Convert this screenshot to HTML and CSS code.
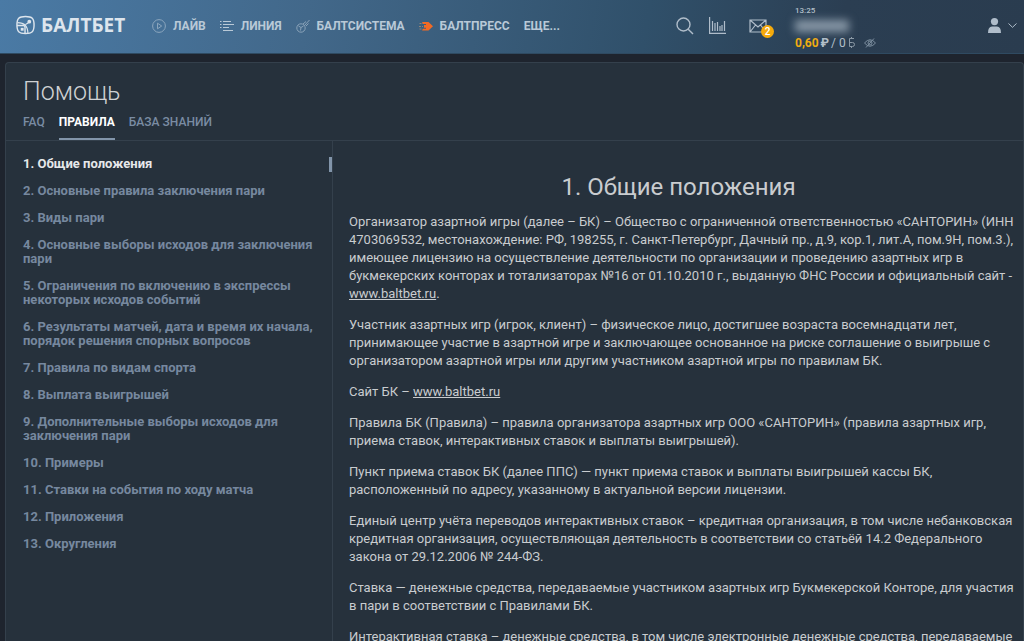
FILE: index.html
```html
<!DOCTYPE html>
<html lang="ru">
<head>
    <meta charset="UTF-8">
    <meta name="viewport" content="width=device-width, initial-scale=1.0">
    <title>Помощь – Правила</title>
    <link rel="stylesheet" href="styles.css">
</head>
<body>
    <header class="header">
        <a class="logo" href="#">
            <svg class="logo-icon" viewBox="0 0 20 20" fill="none" stroke="currentColor" stroke-width="1.5">
                <path d="M10 1C17 1 19 3 19 10S17 19 10 19 1 17 1 10 3 1 10 1Z"/>
                <path d="M1 10.500H7.500Q9.500 10.500 9.500 12.500V19"/>
                <path d="M1.500 7.500C7 7.500 12.500 10 12.500 19M10 9.500C11.500 9 13 8 14 6.500" stroke-width="1.200"/>
                <rect x="5" y="13" width="3" height="3" fill="currentColor" stroke="none"/>
                <circle cx="14" cy="6.500" r="2" fill="currentColor" stroke="none"/>
            </svg>
            <span>БАЛТБЕТ</span>
        </a>
        <nav class="nav">
            <a href="#">
                <svg class="nav-icon" viewBox="0 0 14 14" fill="none" stroke="currentColor">
                    <circle cx="7" cy="7" r="6.400"/>
                    <path d="M5.500 4.200 9.700 7 5.500 9.800Z"/>
                </svg>
                ЛАЙВ
            </a>
            <a href="#">
                <svg class="nav-icon nav-icon-line" viewBox="0 0 14 14" fill="none" stroke="currentColor">
                    <path d="M0 2.500H1.500M3 2.500H11M0 5.500H1.500M3 5.500H14M0 8.500H1.500M3 8.500H9M3 11.500H13"/>
                </svg>
                ЛИНИЯ
            </a>
            <a href="#">
                <svg class="nav-icon" viewBox="0 0 14 14" fill="none" stroke="currentColor">
                    <circle cx="5" cy="9" r="4.200"/>
                    <path d="M2.500 7 5 8.500 7.500 7M5 8.500 4.500 11.500M7 5 10 2.500M8.500 6.500 13.500 1M10 7 12.500 4.500" />
                </svg>
                БАЛТСИСТЕМА
            </a>
            <a href="#">
                <svg class="nav-icon nav-icon-press" viewBox="0 0 14 14">
                    <path d="M3 3H9.500L14 7.300 9.500 11.500H3L4 9.800H7V8.800H5V6H7V5H4Z" fill="#f26a25"/>
                    <path d="M.500 4.500H4M0 7.500H4M.500 10H3" stroke="#8f8478" fill="none" stroke-dasharray="2 1"/>
                </svg>
                БАЛТПРЕСС
            </a>
            <a href="#">ЕЩЕ...</a>
        </nav>
        <div class="tools">
            <button class="icon-btn" type="button" aria-label="Поиск">
                <svg width="18" height="18" viewBox="0 0 18 18" fill="none" stroke="currentColor" stroke-width="1.400">
                    <circle cx="7.500" cy="7.500" r="6.500"/>
                    <path d="M12.200 12.200 17 17"/>
                </svg>
            </button>
            <button class="icon-btn" type="button" aria-label="Статистика">
                <svg width="17" height="17" viewBox="0 0 17 17" fill="none" stroke="currentColor" stroke-width="1.200">
                    <path d="M.600 0V16.400H17M3.500 14V4M6 14V6M8.500 14V5M11 14V9M13 14V8M15.500 14V4"/>
                </svg>
            </button>
            <button class="icon-btn mail" type="button" aria-label="Сообщения">
                <svg width="18" height="14" viewBox="0 0 18 14" fill="none" stroke="currentColor" stroke-width="1.200">
                    <path d="M1 1H17V13H1ZM1 1 9 8 17 1M1 13 6.500 6M17 13 11.500 6"/>
                </svg>
                <span class="badge">2</span>
            </button>
        </div>
        <div class="account">
            <time class="clock">13:25</time>
            <div class="account-name"></div>
            <div class="balance">
                <b class="money">0,60</b>
                <b>₽</b>
                <span>/ 0</span>
                <svg class="bonus" width="7" height="11" viewBox="0 0 7 11" fill="none" stroke="currentColor">
                    <path d="M6 1.500H1.500V9.500H4.500Q6.500 9.500 6.500 7.500T4.500 5.500H1.500M3.500 0V1.500M3.500 9.500V11"/>
                </svg>
                <button class="icon-btn eye" type="button" aria-label="Скрыть баланс">
                    <svg width="12" height="10" viewBox="0 0 12 10" fill="none" stroke="currentColor">
                        <path d="M.500 5Q6-1.500 11.500 5 6 11.500.500 5ZM2 9.500 10 .500"/>
                        <circle cx="6" cy="5" r="2"/>
                    </svg>
                </button>
            </div>
        </div>
        <button class="icon-btn profile" type="button" aria-label="Профиль">
            <svg width="13" height="15" viewBox="0 0 13 15" fill="currentColor">
                <circle cx="6.500" cy="3.600" r="3.600"/>
                <path d="M0 15Q0 8.500 4 8.500H9Q13 8.500 13 15Z"/>
            </svg>
            <svg width="9" height="5" viewBox="0 0 9 5" fill="none" stroke="currentColor">
                <path d="M.500.500 4.500 4.300 8.500.500"/>
            </svg>
        </button>
    </header>

    <main class="panel">
        <div class="panel-header">
            <h1>Помощь</h1>
            <nav class="tabs">
                <a href="#">FAQ</a>
                <a class="active" href="#">ПРАВИЛА</a>
                <a href="#">БАЗА ЗНАНИЙ</a>
            </nav>
        </div>
        <div class="panel-body">
            <aside class="sidebar">
                <ul class="contents">
                    <li><a class="active" href="#">1. Общие положения</a></li>
                    <li><a href="#">2. Основные правила заключения пари</a></li>
                    <li><a href="#">3. Виды пари</a></li>
                    <li><a href="#">4. Основные выборы исходов для заключения пари</a></li>
                    <li><a href="#">5. Ограничения по включению в экспрессы некоторых исходов событий</a></li>
                    <li><a href="#">6. Результаты матчей, дата и время их начала, порядок решения спорных вопросов</a></li>
                    <li><a href="#">7. Правила по видам спорта</a></li>
                    <li><a href="#">8. Выплата выигрышей</a></li>
                    <li><a href="#">9. Дополнительные выборы исходов для заключения пари</a></li>
                    <li><a href="#">10. Примеры</a></li>
                    <li><a href="#">11. Ставки на события по ходу матча</a></li>
                    <li><a href="#">12. Приложения</a></li>
                    <li><a href="#">13. Округления</a></li>
                </ul>
                <div class="scroll-thumb"></div>
            </aside>
            <article class="article">
                <h2>1. Общие положения</h2>
                <p>Организатор азартной игры (далее – БК) – Общество с ограниченной ответственностью «САНТОРИН» (ИНН 4703069532, местонахождение: РФ, 198255, г. Санкт-Петербург, Дачный пр., д.9, кор.1, лит.А, пом.9Н, пом.3.), имеющее лицензию на осуществление деятельности по организации и проведению азартных игр в букмекерских конторах и тотализаторах №16 от 01.10.2010 г., выданную ФНС России и официальный сайт - <a href="#">www.baltbet.ru</a>.</p>
                <p>Участник азартных игр (игрок, клиент) – физическое лицо, достигшее возраста восемнадцати лет, принимающее участие в азартной игре и заключающее основанное на риске соглашение о выигрыше с организатором азартной игры или другим участником азартной игры по правилам БК.</p>
                <p>Сайт БК – <a href="#">www.baltbet.ru</a></p>
                <p>Правила БК (Правила) – правила организатора азартных игр ООО «САНТОРИН» (правила азартных игр, приема ставок, интерактивных ставок и выплаты выигрышей).</p>
                <p>Пункт приема ставок БК (далее ППС) — пункт приема ставок и выплаты выигрышей кассы БК, расположенный по адресу, указанному в актуальной версии лицензии.</p>
                <p>Единый центр учёта переводов интерактивных ставок – кредитная организация, в том числе небанковская кредитная организация, осуществляющая деятельность в соответствии со статьёй 14.2 Федерального закона от 29.12.2006 № 244-ФЗ.</p>
                <p>Ставка — денежные средства, передаваемые участником азартных игр Букмекерской Конторе, для участия в пари в соответствии с Правилами БК.</p>
                <p>Интерактивная ставка – денежные средства, в том числе электронные денежные средства, передаваемые</p>
            </article>
        </div>
    </main>
</body>
</html>
```
FILE: styles.css
```css
* {
    margin: 0;
    padding: 0;
    box-sizing: border-box;
}

body {
    display: flex;
    flex-direction: column;
    height: 100vh;
    overflow: hidden;
    background: #1e242e;
    color: #c9cccf;
    font-family: Roboto, "Liberation Sans", sans-serif;
    font-size: 13px;
}

a {
    color: inherit;
    text-decoration: none;
}

svg {
    flex: none;
}

/* Header */
.header {
    flex: none;
    display: flex;
    align-items: center;
    height: 54px;
    padding: 0 7px 0 16px;
    border-bottom: 1px solid #2f4a61;
    background: linear-gradient(100deg, #4a7aa5 0%, #42688a 30%, #30506a 63%, #2b3e52 82%, #2a3c4f 100%);
}

.logo {
    display: flex;
    align-items: center;
    gap: 6px;
    width: 136px;
    margin-top: -3px;
    color: #dde5ed;
    font-family: "Open Sans", sans-serif;
    font-size: 19px;
    font-weight: 700;
}

.logo-icon {
    width: 19px;
    height: 20px;
}

.nav {
    display: flex;
    gap: 14px;
    margin-top: -2px;
    color: #b9c9d7;
    font-size: 12px;
    font-weight: 700;
    white-space: nowrap;
}

.nav a {
    display: flex;
    align-items: center;
    gap: 7px;
}

.nav-icon {
    width: 14px;
    height: 14px;
    opacity: 0.6;
}

.nav-icon-line,
.nav-icon-press {
    opacity: 1;
}

.icon-btn {
    display: flex;
    align-items: center;
    border: none;
    background: none;
    color: #b0bdca;
    cursor: pointer;
}

.tools {
    display: flex;
    align-items: center;
    gap: 15px;
    margin: -2px 28px 0 auto;
}

.mail {
    position: relative;
    margin-left: 8px;
}

.badge {
    position: absolute;
    top: 6px;
    left: 12px;
    width: 13px;
    height: 13px;
    border-radius: 50%;
    background: #f5aa0c;
    color: #fff;
    font-family: Roboto, sans-serif;
    font-size: 10px;
    font-weight: 500;
    line-height: 13px;
    text-align: center;
}

.account {
    width: 193px;
    color: #b4c0ca;
}

.clock {
    display: block;
    font-size: 8px;
    font-weight: 500;
    line-height: 13px;
}

.account-name {
    width: 54px;
    height: 12px;
    margin: 3px 0 4px;
    background: #8797a6;
    filter: blur(4px);
}

.balance {
    display: flex;
    align-items: center;
    gap: 2px;
    font-size: 12px;
    line-height: 14px;
}

.money {
    color: #f0ac10;
}

.bonus {
    opacity: 0.7;
}

.eye {
    margin-left: 7px;
    color: #7d8fa0;
}

.profile {
    gap: 7px;
    margin-top: -3px;
}

/* Help panel */
.panel {
    flex: 1;
    display: flex;
    flex-direction: column;
    min-height: 0;
    margin: 8px 0 0 5px;
    border: 1px solid #34404c;
    border-bottom: none;
    border-radius: 4px 4px 0 0;
    background: #26313c;
}

.panel-header {
    flex: none;
    padding: 13px 17px 0;
    border-bottom: 1px solid #34404c;
}

.panel-header h1 {
    color: #cfd1d3;
    font-size: 25px;
    font-weight: 300;
    line-height: 32px;
}

.tabs {
    display: flex;
    gap: 14px;
    margin-top: 5px;
    color: #7a8ca3;
    font-size: 12px;
    font-weight: 500;
    line-height: 18px;
}

.tabs a {
    padding-bottom: 7px;
    border-bottom: 2px solid transparent;
}

.tabs .active {
    border-color: #8295aa;
    color: #fff;
    font-weight: 700;
}

.panel-body {
    flex: 1;
    display: grid;
    grid-template-columns: 327px 1fr;
    min-height: 0;
}

.sidebar {
    position: relative;
    padding: 9px 16px 0 17px;
    border-right: 1px solid #34404c;
}

.contents {
    list-style: none;
    color: #76889f;
    font-size: 13px;
    font-weight: 700;
    line-height: 14px;
}

.contents a {
    display: block;
    padding: 7px 0 6px;
}

.contents .active {
    color: #e6e8ea;
}

.scroll-thumb {
    position: absolute;
    top: 16px;
    right: 0;
    width: 3px;
    height: 15px;
    background: #8295aa;
}

.article {
    overflow: hidden;
    padding: 31px 5px 0 16px;
}

.article h2 {
    margin: 0 10px 11px 0;
    font-size: 24px;
    font-weight: 400;
    line-height: 30px;
    text-align: center;
}

.article p {
    margin-bottom: 13px;
    line-height: 18px;
}

.article a {
    text-decoration: underline;
}
```
